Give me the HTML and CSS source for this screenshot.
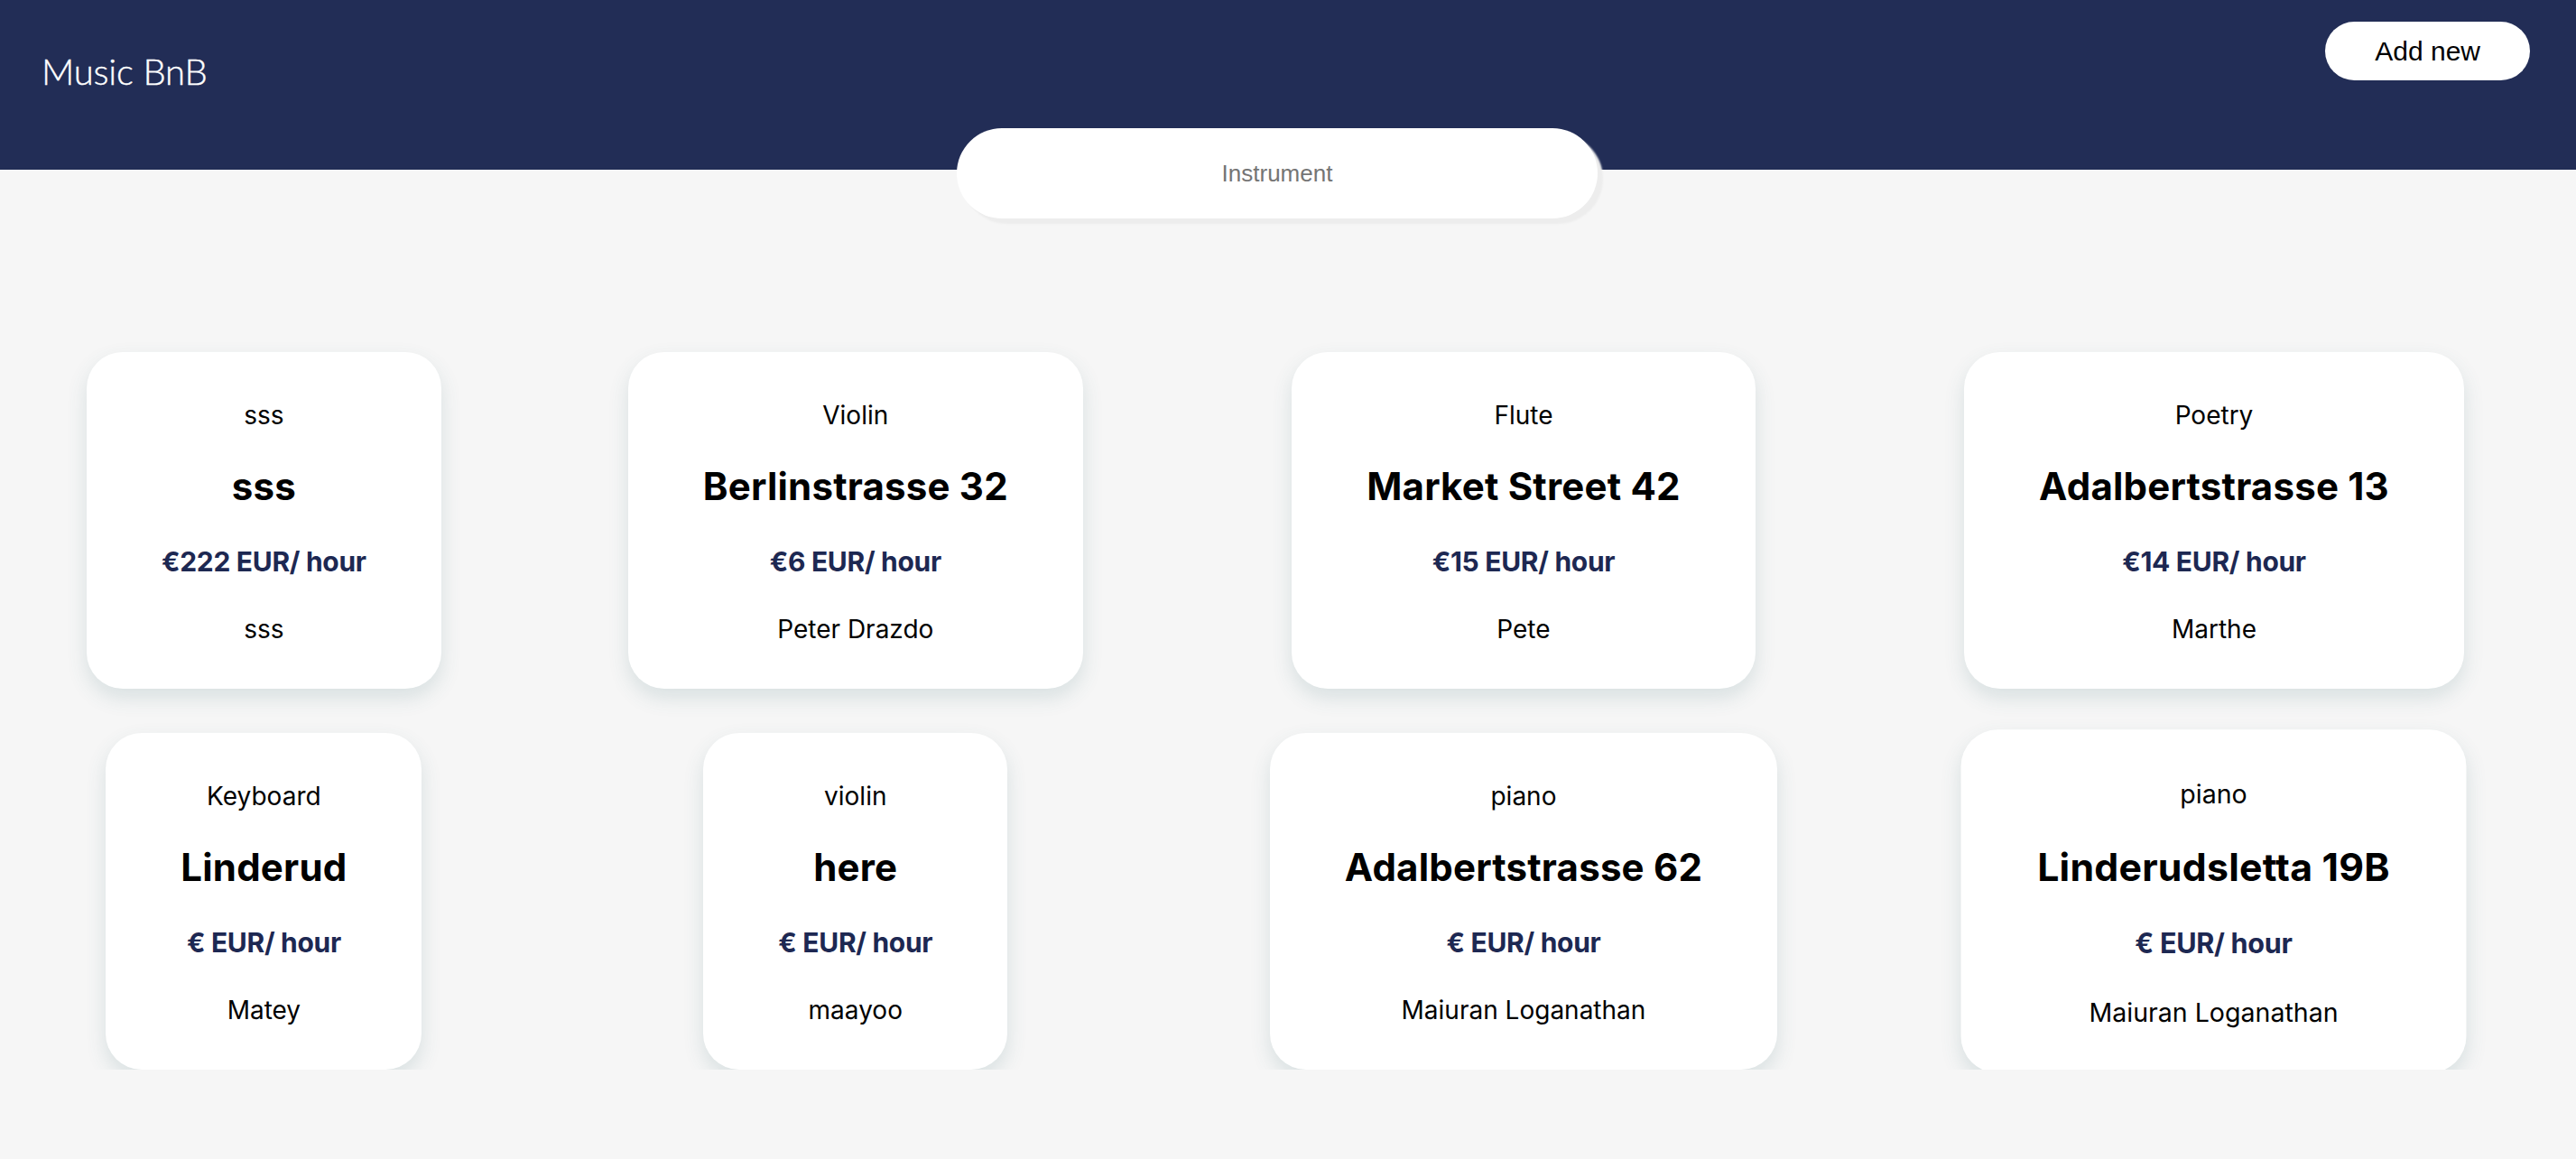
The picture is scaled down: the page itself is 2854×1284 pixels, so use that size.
FILE: index.html
```html
<!DOCTYPE html>
<html lang="en">
<head>
<meta charset="utf-8">
<title>Music BnB</title>
<link rel="stylesheet" href="styles.css">
</head>
<body>
<header class="topbar">
  <div class="logo">Music BnB</div>
  <button class="add-btn">Add new</button>
</header>
<div class="search-wrap">
  <input class="search" type="text" placeholder="Instrument">
</div>
<main class="grid">
  <div class="card">
    <p class="label">sss</p>
    <h2 class="title">sss</h2>
    <p class="price">€222 EUR/ hour</p>
    <p class="owner">sss</p>
  </div>
  <div class="card">
    <p class="label">Violin</p>
    <h2 class="title">Berlinstrasse 32</h2>
    <p class="price">€6 EUR/ hour</p>
    <p class="owner">Peter Drazdo</p>
  </div>
  <div class="card">
    <p class="label">Flute</p>
    <h2 class="title">Market Street 42</h2>
    <p class="price">€15 EUR/ hour</p>
    <p class="owner">Pete</p>
  </div>
  <div class="card">
    <p class="label">Poetry</p>
    <h2 class="title">Adalbertstrasse 13</h2>
    <p class="price">€14 EUR/ hour</p>
    <p class="owner">Marthe</p>
  </div>
  <div class="card">
    <p class="label">Keyboard</p>
    <h2 class="title">Linderud</h2>
    <p class="price">€ EUR/ hour</p>
    <p class="owner">Matey</p>
  </div>
  <div class="card">
    <p class="label">violin</p>
    <h2 class="title">here</h2>
    <p class="price">€ EUR/ hour</p>
    <p class="owner">maayoo</p>
  </div>
  <div class="card">
    <p class="label">piano</p>
    <h2 class="title">Adalbertstrasse 62</h2>
    <p class="price">€ EUR/ hour</p>
    <p class="owner">Maiuran Loganathan</p>
  </div>
  <div class="card card-hover">
    <p class="label">piano</p>
    <h2 class="title">Linderudsletta 19B</h2>
    <p class="price">€ EUR/ hour</p>
    <p class="owner">Maiuran Loganathan</p>
  </div>
</main>
</body>
</html>
```

FILE: styles.css
```css
* {
  box-sizing: border-box;
}

html, body {
  margin: 0;
  padding: 0;
}

body {
  background: #f6f6f6;
  font-family: "Inter", "Liberation Sans", sans-serif;
  color: #000;
}

.topbar {
  height: 188px;
  background: #222d56;
  display: flex;
  justify-content: space-between;
  align-items: flex-start;
  padding: 0 51px 0 46px;
}

.logo {
  font-family: "Lato", "Liberation Sans", sans-serif;
  font-weight: 300;
  font-size: 40px;
  line-height: 48px;
  color: #fff;
  margin-top: 55px;
  letter-spacing: -0.2px;
  -webkit-text-stroke: 0.4px #fff;
}

.add-btn {
  margin-top: 24px;
  height: 65px;
  padding: 0 55px;
  border: none;
  border-radius: 33px;
  background: #fff;
  color: #000;
  font-family: "Liberation Sans", Arial, sans-serif;
  font-size: 30px;
  line-height: 34px;
}

.search-wrap {
  display: flex;
  justify-content: center;
  margin-top: -46px;
  padding-right: 24px;
}

.search {
  width: 710px;
  height: 100px;
  border: none;
  border-radius: 50px;
  background: #fff;
  box-shadow: 6px 6px 2px #ededed;
  font-family: "Liberation Sans", Arial, sans-serif;
  font-size: 26px;
  text-align: center;
  outline: none;
}

.search::placeholder {
  color: #757575;
}

.grid {
  display: grid;
  grid-template-columns: repeat(4, auto);
  justify-content: start;
  column-gap: 207px;
  row-gap: 49px;
  padding: 148px 0 0 96px;
}

.card {
  justify-self: center;
  background: #fff;
  border-radius: 40px;
  padding: 53px 83px 49px;
  text-align: center;
  box-shadow: 0 10px 22px rgba(60, 110, 120, 0.16);
}

.card-hover {
  transform: scale(1.02);
}

.label,
.title,
.price,
.owner {
  margin: 0;
  white-space: nowrap;
}

.label {
  font-size: 28px;
  font-weight: 400;
  margin-bottom: 36px;
}

.title {
  font-size: 42px;
  font-weight: 700;
  letter-spacing: 0.2px;
  margin-bottom: 40px;
}

.price {
  font-size: 30px;
  font-weight: 700;
  letter-spacing: -0.3px;
  color: #1d2852;
  margin-bottom: 40px;
}

.owner {
  font-size: 28px;
  font-weight: 400;
}
```
